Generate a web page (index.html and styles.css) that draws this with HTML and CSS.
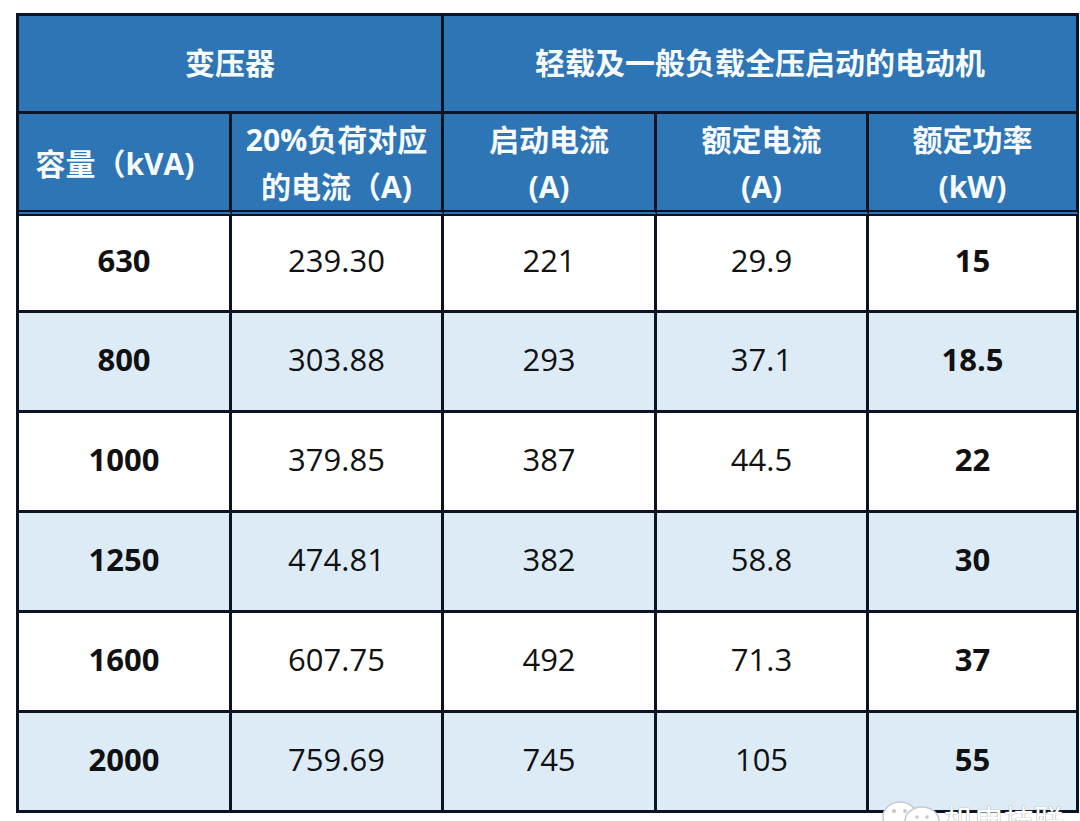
FILE: index.html
```html
<!DOCTYPE html>
<html lang="zh-CN">
<head>
<meta charset="utf-8">
<title>变压器与电动机</title>
<link rel="stylesheet" href="styles.css">
</head>
<body>
<div class="page">
  <table class="grid">
    <colgroup>
      <col class="c1"><col class="c2"><col class="c3"><col class="c4"><col class="c5">
    </colgroup>
    <thead>
      <tr class="h1">
        <th colspan="2">变压器</th>
        <th colspan="3">轻载及一般负载全压启动的电动机</th>
      </tr>
      <tr class="h2">
        <th class="cap">容量（kVA)</th>
        <th>20%负荷对应<br>的电流（A)</th>
        <th>启动电流<br>(A)</th>
        <th>额定电流<br>(A)</th>
        <th>额定功率<br>(kW)</th>
      </tr>
    </thead>
    <tbody>
      <tr class="first"><td class="b">630</td><td>239.30</td><td>221</td><td>29.9</td><td class="b">15</td></tr>
      <tr class="alt"><td class="b">800</td><td>303.88</td><td>293</td><td>37.1</td><td class="b">18.5</td></tr>
      <tr><td class="b">1000</td><td>379.85</td><td>387</td><td>44.5</td><td class="b">22</td></tr>
      <tr class="alt"><td class="b">1250</td><td>474.81</td><td>382</td><td>58.8</td><td class="b">30</td></tr>
      <tr><td class="b">1600</td><td>607.75</td><td>492</td><td>71.3</td><td class="b">37</td></tr>
      <tr class="alt"><td class="b">2000</td><td>759.69</td><td>745</td><td>105</td><td class="b">55</td></tr>
    </tbody>
  </table>
  <div class="mark">
    <svg class="wx" width="62" height="40" viewBox="0 0 62 40">
      <ellipse cx="20" cy="20" rx="17" ry="15" fill="#fff" stroke="#c9c9c9" stroke-width="1.5"/>
      <circle cx="14" cy="14" r="2" fill="#c9c9c9"/>
      <circle cx="25" cy="14" r="2" fill="#c9c9c9"/>
      <ellipse cx="42" cy="24" rx="17" ry="14" fill="#fff" stroke="#c9c9c9" stroke-width="1.5"/>
      <circle cx="37" cy="20" r="1.8" fill="#c9c9c9"/>
      <circle cx="47" cy="20" r="1.8" fill="#c9c9c9"/>
    </svg>
    <span class="mark-text">机电技联</span>
  </div>
</div>
</body>
</html>
```
FILE: styles.css
```css
html, body {
  margin: 0;
  padding: 0;
  background: #ffffff;
  overflow: hidden;
}
.page {
  position: relative;
  width: 1080px;
  height: 821px;
  padding: 13px 0 0 16px;
  box-sizing: border-box;
}
.grid {
  border-collapse: separate;
  border-spacing: 0;
  table-layout: fixed;
  width: 1063px;
  border-top: 3px solid #0b1324;
  border-left: 3px solid #0b1324;
  font-family: "Open Sans", "Noto Sans CJK SC", sans-serif;
  font-size: 31px;
  color: #111111;
}
.c1 { width: 213px; }
.c2 { width: 212px; }
.c3 { width: 213px; }
.c4 { width: 212px; }
.c5 { width: 210px; }
.grid th, .grid td {
  box-sizing: border-box;
  border-right: 3px solid #0b1324;
  border-bottom: 3px solid #0b1324;
  padding: 0;
  text-align: center;
  vertical-align: middle;
}
.grid th {
  background: #2e75b6;
  color: #f7fafd;
  font-family: "Open Sans", "Noto Sans CJK SC", sans-serif;
  font-weight: 700;
  font-size: 30px;
  line-height: 47px;
}
.h1 th {
  height: 98px;
  padding-bottom: 2px;
}
.h2 th {
  height: 101px;
  border-bottom: 6px double #0b1324;
  padding-top: 2px;
}
.h2 th.cap {
  padding-right: 18px;
}
.grid td {
  height: 100px;
  background: #ffffff;
  font-weight: 400;
  padding-bottom: 6px;
}
.grid tr.first td {
  height: 97px;
}
.grid tr.alt td {
  background: #ddebf7;
}
.grid td.b {
  font-weight: 700;
}
.mark {
  position: absolute;
  left: 880px;
  top: 797px;
  display: flex;
  align-items: flex-start;
  gap: 2px;
}
.wx {
  display: block;
}
.mark-text {
  font-family: "Noto Sans CJK SC", sans-serif;
  font-size: 30px;
  line-height: 36px;
  color: #ffffff;
  margin-top: 3px;
  text-shadow: 0 0 1px #9a9a9a, 0 0 1px #9a9a9a;
}
```
